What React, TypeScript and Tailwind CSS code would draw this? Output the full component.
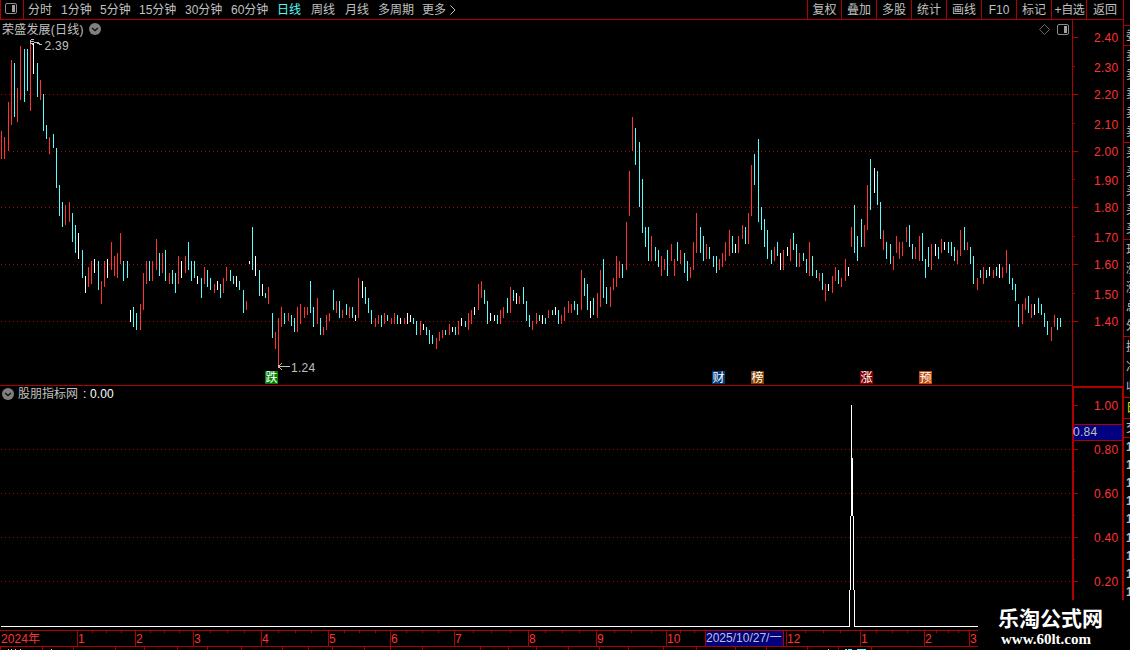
import { clsx } from 'clsx';

type Tone = 'r' | 'c' | 'w';

const TONES: Record<Tone, string> = {
  r: '#ff3232',
  c: '#54fcfc',
  w: '#ffffff',
};

// x, top, bottom, tone
const BARS = `
1,131,159,r 4,137,159,r 8,102,151,r 11,60,125,r 14,63,117,c 17,88,122,r 20,46,100,r 24,49,102,c 27,49,91,c
30,43,111,r 33,43,74,w 37,63,97,c 40,80,100,r 43,94,131,c 46,125,139,c 49,137,154,r 53,134,148,c 56,148,188,c
59,185,216,c 62,202,227,c 65,205,225,r 69,202,222,r 72,213,242,c 75,225,253,c 78,233,259,w 82,250,278,c
85,276,293,w 88,267,287,r 91,261,284,r 94,259,273,w 98,261,290,c 101,281,304,r 104,261,287,r 107,259,278,w
111,242,270,r 114,256,276,r 117,253,278,r 120,233,264,r 123,261,281,c 127,261,278,c 130,310,322,w 133,307,327,c
136,313,330,c 140,304,330,r 143,273,310,r 146,261,284,r 149,261,281,c 152,261,281,r 156,239,270,r 159,253,276,c
162,253,273,r 165,250,281,c 169,273,284,r 172,270,284,c 175,273,293,c 178,256,284,r 181,261,278,w 185,256,273,r
188,242,270,c 191,261,281,c 194,261,278,c 197,276,284,w 201,278,298,c 204,267,284,r 207,270,287,c 210,278,290,c
214,284,293,r 217,281,290,w 220,284,298,c 223,278,293,r 226,267,281,r 230,270,281,c 233,276,284,c 236,276,287,w
239,281,290,c 243,290,313,c 246,301,310,r 249,261,264,w 252,227,270,c 255,256,276,w 259,270,296,c 262,284,296,w
265,293,298,c 268,287,304,r 272,313,338,c 275,332,349,r 278,318,366,r 281,307,327,r 284,313,324,c 288,313,321,r
291,315,326,c 294,318,332,c 297,307,332,r 300,304,324,r 304,307,318,r 307,307,315,r 310,281,313,c 313,307,327,c
317,298,324,r 320,318,335,c 323,327,335,r 326,315,330,r 329,313,321,r 333,290,310,c 336,301,313,r 339,301,318,c
342,310,318,r 346,304,315,c 349,307,318,r 352,307,318,c 355,315,321,w 358,278,318,r 362,281,298,w 365,287,304,c
368,298,313,c 371,310,324,c 375,318,327,r 378,315,324,r 381,315,327,c 384,313,324,r 387,315,321,c 391,318,324,r
394,313,324,r 397,315,324,c 400,318,324,w 404,318,324,r 407,313,324,w 410,315,322,w 413,318,324,c 416,321,335,c
420,321,335,r 423,324,330,w 426,327,335,c 429,330,344,c 432,335,344,c 436,338,349,r 439,332,341,r 442,330,338,r
445,330,335,c 449,324,335,r 452,327,332,w 455,327,335,c 458,321,335,r 461,318,326,w 465,321,327,c 468,313,330,r
471,310,324,r 474,307,315,w 478,284,310,r 481,281,298,r 484,290,304,c 487,301,324,c 490,313,321,w 494,315,321,w
497,315,324,c 500,310,324,r 503,307,318,r 507,298,313,c 510,287,313,r 513,290,301,c 516,293,304,w 519,296,304,r
523,287,304,c 526,301,321,c 529,315,327,c 532,321,330,r 536,313,324,r 539,315,321,c 542,315,324,w 545,318,324,c
548,310,318,r 552,310,315,c 555,307,315,w 558,310,324,c 561,315,324,r 564,307,321,r 568,301,313,r 571,304,313,r
574,301,310,c 577,304,315,c 581,270,310,r 584,278,296,c 587,284,310,c 590,301,318,w 593,298,315,c 597,293,318,r
600,270,307,r 603,259,298,c 606,287,304,c 610,287,307,r 613,278,290,r 616,256,287,r 619,261,278,r 622,264,278,c
626,222,270,r 629,171,216,r 632,117,151,r 635,128,165,c 639,142,207,c 642,179,233,c 645,227,247,c 648,227,261,c
651,236,261,r 655,247,261,c 658,250,267,c 661,256,276,r 664,259,270,r 667,250,276,c 671,244,261,r 674,259,276,r
677,242,261,c 680,250,264,r 684,253,273,c 687,261,281,c 690,267,278,r 693,242,270,r 696,213,253,r 700,227,253,c
703,236,261,c 706,244,259,r 709,247,259,c 713,256,267,c 716,256,273,c 719,259,270,r 722,253,267,r 725,242,261,r
729,230,256,r 732,236,253,c 735,244,253,w 738,236,253,r 742,225,239,r 745,227,244,c 748,213,244,r 751,165,216,r
754,154,185,c 758,139,222,c 761,207,230,c 764,219,247,c 767,230,259,c 771,250,264,c 774,247,261,r 777,242,256,c
780,253,270,w 783,250,270,r 787,247,256,w 790,239,261,r 793,233,250,c 796,244,267,c 799,253,267,r 803,253,261,c
806,259,273,c 809,242,276,r 812,256,276,c 816,270,278,c 819,273,281,r 822,273,290,c 825,284,301,r 828,284,291,w
832,276,293,r 835,267,281,r 838,270,284,c 841,278,287,r 845,259,281,r 848,267,276,w 851,227,247,r 854,205,253,c
857,236,261,c 861,219,247,c 864,225,247,r 867,185,230,r 870,159,210,c 874,168,193,w 877,171,205,c 880,202,239,c
883,230,250,r 886,242,259,c 890,244,264,c 893,256,270,r 896,236,253,r 899,242,259,r 902,242,256,r 906,227,242,r
909,225,247,c 912,244,259,c 915,247,259,r 919,236,261,r 922,233,261,c 925,259,278,c 928,247,267,c 931,244,270,r
935,244,256,w 938,247,259,c 941,239,253,r 944,242,250,w 948,242,253,c 951,242,256,c 954,247,261,c 957,250,264,r
960,230,256,r 964,227,250,c 967,242,250,r 970,247,264,c 973,256,284,c 977,278,290,r 980,270,278,c 983,267,284,r
986,270,278,c 989,267,276,w 993,270,278,r 996,267,276,c 999,264,278,w 1002,267,278,r 1006,250,273,r 1009,264,284,c
1012,278,290,c 1015,284,301,c 1018,304,327,c 1022,304,324,r 1025,298,310,r 1028,296,313,c 1031,304,318,r
1034,304,315,w 1038,298,313,c 1041,304,315,c 1044,313,327,c 1047,321,335,c 1051,327,341,r 1054,315,327,r
1057,318,330,c 1060,318,327,c`
  .trim()
  .split(/\s+/)
  .map((row) => {
    const [x, top, bottom, tone] = row.split(',');
    return { x: Number(x), top: Number(top), bottom: Number(bottom), tone: tone as Tone };
  });

const PERIODS = [
  { label: '分时', width: 'w-[33px]' },
  { label: '1分钟', width: 'w-[39px]' },
  { label: '5分钟', width: 'w-[39px]' },
  { label: '15分钟', width: 'w-[46px]' },
  { label: '30分钟', width: 'w-[46px]' },
  { label: '60分钟', width: 'w-[46px]' },
  { label: '日线', width: 'w-[34px]', active: true },
  { label: '周线', width: 'w-[34px]' },
  { label: '月线', width: 'w-[33px]' },
  { label: '多周期', width: 'w-[44px]' },
  { label: '更多', width: 'w-[28px]' },
];

const ACTIONS = [
  { label: '复权', width: 'w-[34px]' },
  { label: '叠加', width: 'w-[35px]' },
  { label: '多股', width: 'w-[35px]' },
  { label: '统计', width: 'w-[35px]' },
  { label: '画线', width: 'w-[35px]' },
  { label: 'F10', width: 'w-[35px]' },
  { label: '标记', width: 'w-[35px]' },
  { label: '+自选', width: 'w-[35px] tracking-[-0.4px] pl-px' },
  { label: '返回', width: 'w-[37px]' },
];

const PRICE_TICKS = [
  { label: '2.40', y: 37, text: 37, major: true },
  { label: '2.30', y: 66, text: 67 },
  { label: '2.20', y: 94, text: 94, major: true },
  { label: '2.10', y: 123, text: 124 },
  { label: '2.00', y: 151, text: 151, major: true },
  { label: '1.90', y: 179, text: 180 },
  { label: '1.80', y: 207, text: 207, major: true },
  { label: '1.70', y: 236, text: 237 },
  { label: '1.60', y: 264, text: 264, major: true },
  { label: '1.50', y: 293, text: 294 },
  { label: '1.40', y: 321, text: 321, major: true },
];

const VALUE_TICKS = [
  { label: '1.00', y: 405 },
  { label: '0.80', y: 449 },
  { label: '0.60', y: 493 },
  { label: '0.40', y: 537 },
  { label: '0.20', y: 581 },
];

const MONTHS = [
  { label: '1', x: 77 },
  { label: '2', x: 135 },
  { label: '3', x: 193 },
  { label: '4', x: 261 },
  { label: '5', x: 328 },
  { label: '6', x: 390 },
  { label: '7', x: 454 },
  { label: '8', x: 528 },
  { label: '9', x: 596 },
  { label: '10', x: 666 },
  { label: '12', x: 786 },
  { label: '1', x: 860 },
  { label: '2', x: 924 },
  { label: '3', x: 969 },
];

const WEEK_TICKS = [
  92, 106, 121, 150, 164, 179, 210, 227, 244, 278, 295, 311, 344, 359, 375, 406, 422, 438, 473, 491, 510, 545, 562,
  579, 614, 631, 651, 680, 694, 805, 823, 840, 876, 892, 907, 936, 948, 958,
];

const FOOTER_TICKS = [
  0, 42, 73, 115, 144, 177, 207, 241, 282, 308, 332, 364, 390, 422, 480, 508, 536, 568, 599, 628, 663, 696, 735, 766,
  807, 838, 871,
];

const EVENTS = [
  { label: '跌', place: 'left-[265px]', color: 'bg-[#008000]' },
  { label: '财', place: 'left-[712px]', color: 'bg-[#003c78]' },
  { label: '榜', place: 'left-[751px]', color: 'bg-[#804000]' },
  { label: '涨', place: 'left-[860px]', color: 'bg-[#800000]' },
  { label: '预', place: 'left-[919px]', color: 'bg-[#c04808]' },
];

// Cells of the neighbouring quote list, only their left edge is on screen
const QUOTE_CELLS = [
  { height: 'h-[20px]', rows: ['委'] },
  { height: 'h-[97px]', rows: ['卖', '卖', '卖', '卖', '卖'] },
  { height: 'h-[97px]', rows: ['买', '买', '买', '买', '买'] },
  { height: 'h-[97px]', rows: ['现', '涨', '涨', '总', '外'] },
  { height: 'h-[61px]', rows: ['换', '净', '收'] },
  { height: 'h-[21px]', rows: ['日'], color: 'text-[#e0e000]' },
  { height: 'h-[19px]', rows: ['交'] },
  { height: 'h-[163px]', rows: ['1', '1', '1', '1', '1', '1', '1', '1', '1'], color: 'font-bold text-[#c0c0c0]' },
];

function PanelIcon() {
  return (
    <svg width="12" height="11" viewBox="0 0 12 11" fill="none">
      <rect x="0.5" y="0.5" width="11" height="10" rx="1.5" stroke="#8c8c8c" />
      <rect x="7" y="2" width="3" height="7" fill="#a0a0a0" />
    </svg>
  );
}

function DropIcon() {
  return (
    <svg width="12" height="12" viewBox="0 0 12 12" fill="none">
      <circle cx="6" cy="6" r="6" fill="#808080" />
      <path d="M3 5l3 2.6L9 5" stroke="#101010" strokeWidth="1.3" />
    </svg>
  );
}

function GridLine({ y }: { y: number }) {
  return <line x1="1" x2="1072" y1={y + 0.5} y2={y + 0.5} stroke="#b00000" strokeDasharray="1 3" />;
}

function Toolbar() {
  return (
    <div className="flex h-5 shrink-0 border-b border-l border-[#b00000] text-[#c0c0c0]">
      <div className="flex w-[23px] shrink-0 items-center border-r border-[#b00000] pb-[2px] pl-1">
        <PanelIcon />
      </div>
      <div className="flex flex-1 items-center pl-1">
        {PERIODS.map((p) => (
          <span key={p.label} className={clsx('shrink-0', p.width, p.active && 'text-[#54fcfc]')}>
            {p.label}
          </span>
        ))}
        <svg width="6" height="10" viewBox="0 0 6 10" fill="none">
          <path d="M0.5 0.5L5 5L0.5 9.5" stroke="#c0c0c0" />
        </svg>
      </div>
      <div className="flex shrink-0">
        {ACTIONS.map((a) => (
          <span
            key={a.label}
            className={clsx('flex items-center justify-center border-l border-[#b00000]', a.width)}
          >
            {a.label}
          </span>
        ))}
      </div>
    </div>
  );
}

function PricePanel() {
  return (
    <div className="relative h-[366px] shrink-0">
      <svg width="1123" height="366" viewBox="0 20 1123 366" shapeRendering="crispEdges" className="block">
        {PRICE_TICKS.filter((t) => t.major && t.y > 40).map((t) => (
          <GridLine key={t.label} y={t.y} />
        ))}
        {BARS.map((b) => (
          <rect key={b.x} x={b.x} y={b.top} width="1" height={b.bottom - b.top} fill={TONES[b.tone]} />
        ))}
        <rect x="0" y="385" width="1072" height="1" fill="#b00000" />
        <rect x="1072" y="20" width="1" height="366" fill="#b00000" />
        {PRICE_TICKS.map((t) => (
          <g key={t.label}>
            <rect x="1073" y={t.y} width={t.major ? 5 : 2} height="1" fill="#b00000" />
            <text x="1094" y={t.text + 5} fill="#ff3232" className="tracking-[0.25px]">
              {t.label}
            </text>
          </g>
        ))}
        <path
          d="M31 39.5h3M30.5 40v4M31 41.5h3M31 43.5h1M32.5 43v2M34 42.5h5M37 43.5h3M39 44.5h3"
          stroke="#c0c0c0"
          fill="none"
        />
        <text x="44.5" y="50" fill="#c0c0c0" className="tracking-[0.25px]">
          2.39
        </text>
        <path
          d="M278 366.5h12M278 365.5h2M278 367.5h2M280 364.5h1M280 368.5h1M281 363.5h1M281 369.5h1"
          stroke="#c0c0c0"
          fill="none"
        />
        <text x="291" y="372" fill="#c0c0c0" className="tracking-[0.25px]">
          1.24
        </text>
      </svg>
      <div className="absolute left-[2px] top-[1px] flex h-4 items-center gap-[5px] text-[#c0c0c0]">
        <span className="pt-px tracking-[0.2px]">荣盛发展(日线)</span>
        <DropIcon />
      </div>
      <div className="absolute left-[1039px] top-1 flex items-center gap-[7px]">
        <svg width="11" height="11" viewBox="0 0 11 11" fill="none">
          <path d="M5.5 0.5l5 5l-5 5l-5-5z" stroke="#808080" strokeWidth="0.8" />
        </svg>
        <PanelIcon />
      </div>
      {EVENTS.map((e) => (
        <span
          key={e.label}
          className={clsx(
            'absolute top-[351px] flex h-[13px] w-[13px] items-center justify-center text-white',
            e.place,
            e.color,
          )}
        >
          {e.label}
        </span>
      ))}
    </div>
  );
}

function IndicatorPanel() {
  return (
    <div className="relative h-[244px] shrink-0">
      <svg width="1124" height="244" viewBox="0 386 1124 244" shapeRendering="crispEdges" className="block">
        {VALUE_TICKS.slice(1).map((t) => (
          <GridLine key={t.label} y={t.y} />
        ))}
        <path
          d="M1 626.5H849.5V590M850.5 590V516M851.5 405V516M852.5 458V516M853.5 516V590M854.5 590V626.5H978"
          stroke="#ffffff"
          fill="none"
        />
        <rect x="1072" y="386" width="52" height="2" fill="#b00000" />
        <rect x="1072" y="386" width="2" height="244" fill="#b00000" />
        <rect x="1122" y="386" width="2" height="244" fill="#b00000" />
        {VALUE_TICKS.map((t) => (
          <g key={t.label}>
            <rect x="1074" y={t.y} width="4" height="1" fill="#b00000" />
            <text x="1094" y={t.y + 5} fill="#ff3232" className="tracking-[0.25px]">
              {t.label}
            </text>
          </g>
        ))}
        {[471, 515, 559].map((y) => (
          <rect key={y} x="1074" y={y} width="1" height="1" fill="#b00000" />
        ))}
        <rect x="1074" y="424" width="48" height="17" fill="#b00000" />
        <rect x="1074" y="425" width="48" height="15" fill="#000080" />
        <text x="1073" y="436" fill="#c0c0c0" className="tracking-[0.25px]">
          0.84
        </text>
      </svg>
      <div className="absolute left-[2px] top-0 flex h-4 items-center gap-1 text-[#c0c0c0]">
        <DropIcon />
        <span>股朋指标网</span>
        <span className="pl-px tracking-[0.15px] text-white">: 0.00</span>
      </div>
    </div>
  );
}

function TimeAxis() {
  return (
    <svg width="1123" height="20" viewBox="0 630 1123 20" shapeRendering="crispEdges" className="block shrink-0">
      <rect x="0" y="630" width="1123" height="1" fill="#b00000" />
      <rect x="0" y="646" width="1123" height="1" fill="#b00000" />
      {WEEK_TICKS.map((x) => (
        <rect key={x} x={x} y="631" width="1" height="2" fill="#b00000" />
      ))}
      {FOOTER_TICKS.map((x) => (
        <rect key={x} x={x} y="647" width="1" height="3" fill="#b00000" />
      ))}
      <text x="1" y="643" fill="#ff3232" className="tracking-[0.1px]">
        2024年
      </text>
      {MONTHS.map((m) => (
        <g key={m.x}>
          <rect x={m.x} y="631" width="1" height="15" fill="#b00000" />
          <text x={m.x + 1} y="643" fill="#ff3232">
            {m.label}
          </text>
        </g>
      ))}
      <rect x="705" y="631" width="79" height="15" fill="#b00000" />
      <rect x="706" y="631" width="77" height="15" fill="#000080" />
      <text x="706" y="642" fill="#c0c0c0">
        2025/10/27/一
      </text>
      <path d="M8 649.5h1M11 649.5h1M15 649.5h1M20 649.5h1M51 649.5h1M828 649.5h1" stroke="#c0c0c0" />
      <path d="M845 649.5h2M848 649.5h4M857 649.5h9" stroke="#54fcfc" />
    </svg>
  );
}

function QuoteEdge() {
  return (
    <div className="flex h-[650px] w-[7px] shrink-0 flex-col overflow-hidden border-l border-[#b00000] text-[#c0c0c0]">
      <div className="h-[26px] shrink-0 border-b border-[#b00000]" />
      {QUOTE_CELLS.map((cell, i) => (
        <div
          key={i}
          className={clsx(
            'flex shrink-0 flex-col justify-around overflow-hidden pl-[2px]',
            i < QUOTE_CELLS.length - 1 && 'border-b border-[#b00000]',
            cell.height,
            cell.color,
          )}
        >
          {cell.rows.map((row, j) => (
            <span key={j}>{row}</span>
          ))}
        </div>
      ))}
    </div>
  );
}

export default function App() {
  return (
    <div className="relative flex h-[650px] w-[1130px] overflow-hidden bg-black font-['Liberation_Sans','Noto_Sans_CJK_SC',sans-serif] text-xs leading-4 whitespace-nowrap">
      <div className="flex w-[1123px] shrink-0 flex-col">
        <Toolbar />
        <PricePanel />
        <IndicatorPanel />
        <TimeAxis />
      </div>
      <QuoteEdge />
      <div className="absolute bottom-0 right-0 flex h-[50px] w-[152px] flex-col bg-black pl-5 pt-2 text-white">
        <span className="text-[21px] font-bold leading-[22px]">乐淘公式网</span>
        <span className="pl-[3px] font-['Liberation_Serif',serif] text-[15px] font-bold leading-[18px]">
          www.60lt.com
        </span>
      </div>
    </div>
  );
}
